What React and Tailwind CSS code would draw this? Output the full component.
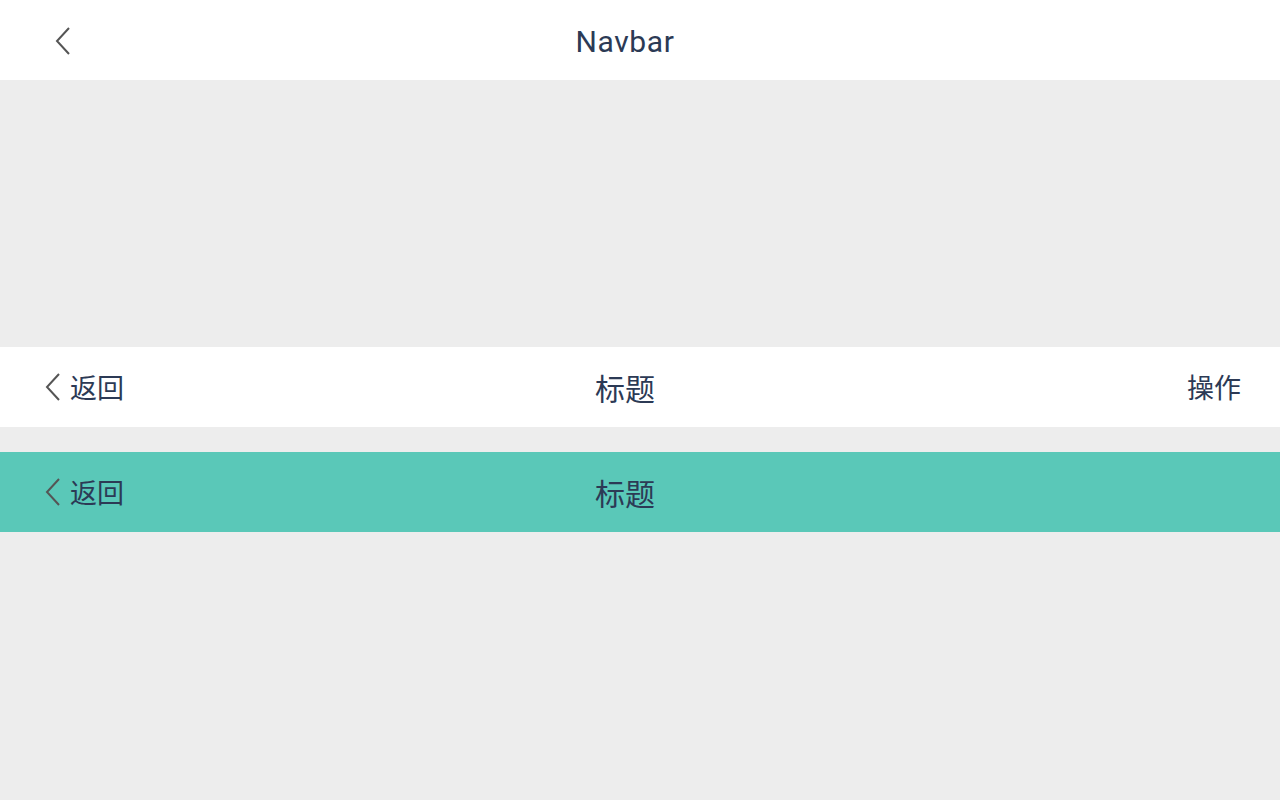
import React from 'react';

const Chevron = ({ className = '' }) => (
  <svg className={className} width="18" height="30" viewBox="0 0 18 30" fill="none">
    <path d="M15 2 L3 15 L15 28" stroke="#555555" strokeWidth="2" />
  </svg>
);

const Bar = ({ bg = 'bg-white', left, title, right, titleClass = '' }) => (
  <div className={`flex h-20 items-center ${bg}`}>
    <div className="flex w-[200px] items-center">{left}</div>
    <div className={`flex-1 text-center text-[#2c3a55] ${titleClass}`}>{title}</div>
    <div className="flex w-[230px] justify-end pr-[39px]">{right}</div>
  </div>
);

export default function App() {
  const cjk = "font-['Noto_Sans_CJK_SC',sans-serif] text-[27px]";
  const cjkTitle = "font-['Noto_Sans_CJK_SC',sans-serif] text-[30px]";
  return (
    <div className="min-h-screen w-full bg-[#ededed] font-['Roboto','Noto_Sans_CJK_SC',sans-serif]">
      <Bar
        left={<Chevron className="ml-[54px] mt-[2px]" />}
        title="Navbar"
        titleClass="text-[30px] tracking-[0.6px] mt-[3px] font-['Roboto',sans-serif]"
      />
      <div className="h-[267px]" />
      <Bar
        left={
          <div className="ml-[44px] flex items-center">
            <Chevron />
            <span className={`ml-[8px] text-[#2c3a55] ${cjk}`}>返回</span>
          </div>
        }
        title="标题"
        titleClass={cjkTitle}
        right={<span className={`text-[#2c3a55] ${cjk}`}>操作</span>}
      />
      <div className="h-[25px]" />
      <Bar
        bg="bg-[#5ac8b8]"
        left={
          <div className="ml-[44px] flex items-center">
            <Chevron />
            <span className={`ml-[8px] text-[#2c3a55] ${cjk}`}>返回</span>
          </div>
        }
        title="标题"
        titleClass={cjkTitle}
      />
    </div>
  );
}
